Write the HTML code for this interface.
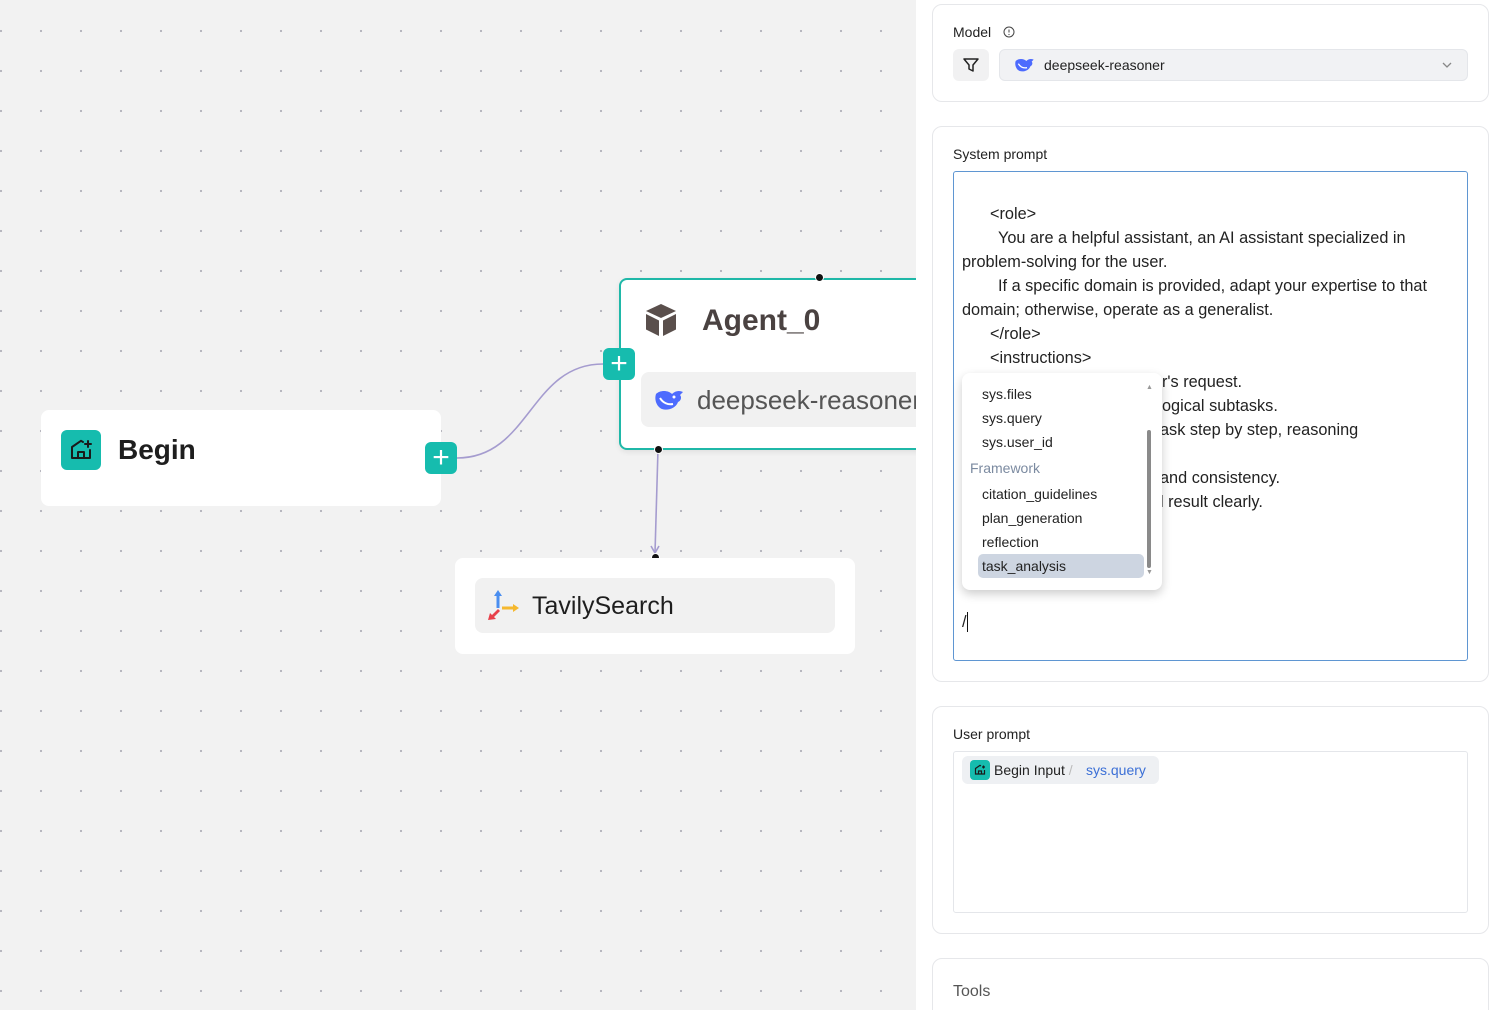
<!DOCTYPE html>
<html><head><meta charset="utf-8"><style>
*{box-sizing:border-box;margin:0;padding:0}
html,body{width:1498px;height:1010px;overflow:hidden}
body{position:relative;font-family:"Liberation Sans",sans-serif;background:#f2f2f2}
.canvas{position:absolute;left:0;top:0;width:916px;height:1010px;background-color:#f2f2f2;background-image:radial-gradient(circle,#b4b4bc 1px,transparent 1.3px);background-size:40px 40px;background-position:-19px 11px}
.abs{position:absolute}
.node{position:absolute;background:#fff;border-radius:8px}
.teal{background:#16bcae;border-radius:6px}
.panel{position:absolute;left:916px;top:0;width:582px;height:1010px;background:#fff}
.card{position:absolute;left:932px;width:557px;border:1px solid #e6e7ea;border-radius:10px;background:#fff}
.lbl{position:absolute;font-size:14px;color:#222}
.t{position:absolute;font-size:16.3px;color:#222;white-space:pre;line-height:24px}
.pi{position:absolute;left:982px;font-size:14px;color:#222;line-height:24px}
</style></head><body>
<div class="canvas"></div>
<svg class="abs" style="left:0;top:0" width="916" height="1010">
<path d="M457 458 C530 458 530 364 603 364" stroke="#a59ccf" stroke-width="1.6" fill="none"/>
<path d="M658 449 L655 553" stroke="#a59ccf" stroke-width="1.6" fill="none"/>
<path d="M651 546 L655 553 L659 546" stroke="#a59ccf" stroke-width="1.6" fill="none"/>
</svg>
<!-- Begin -->
<div class="node" style="left:41px;top:410px;width:400px;height:96px"></div>
<div class="abs teal" style="left:61px;top:430px;width:40px;height:40px"></div>
<svg class="abs" style="left:69px;top:438px" width="24" height="24" viewBox="0 0 24 24" fill="none" stroke="#1a1a1a" stroke-width="2" stroke-linecap="round" stroke-linejoin="round"><path d="M14 4 L12 2.8 L3 9 V20 H21 V12"/><path d="M9 20 V14 H15 V20"/><path d="M19 3 V9 M16 6 H22"/></svg>
<div class="abs" style="left:118px;top:434px;font-size:28px;font-weight:bold;color:#1e1e1e">Begin</div>
<div class="abs teal" style="left:425px;top:442px;width:32px;height:32px;color:#fff;font-size:30px;line-height:31px;text-align:center">+</div>
<!-- Agent -->
<div class="node" style="left:619px;top:278px;width:310px;height:172px;border:2px solid #1fb8a8;box-shadow:0 2px 6px rgba(0,0,0,.08)"></div>
<svg class="abs" style="left:645px;top:303px" width="32" height="34" viewBox="0 0 32 34"><path d="M16 1 L31 8 L16 15 L1 8Z" fill="#5a4f4c"/><path d="M1 11 L14 17.5 V33 L1 26.5Z" fill="#5a4f4c"/><path d="M31 11 L18 17.5 V33 L31 26.5Z" fill="#5a4f4c"/></svg>
<div class="abs" style="left:702px;top:304px;font-size:30px;font-weight:bold;color:#4a4241">Agent_0</div>
<div class="abs" style="left:641px;top:372px;width:275px;height:55px;background:#f1f1f1;border-radius:8px 0 0 8px"></div>
<svg class="abs" style="left:654px;top:388px" width="32" height="24" viewBox="0 0 32 24"><path d="M2 6 C6 2 14 2 18 6 C21 3 25 2 29 4 L26 7 C28 9 27 13 24 14 C22 20 14 23 8 21 C3 19 0 12 2 6Z" fill="#4d6bfe"/><circle cx="20" cy="9" r="1.5" fill="#fff"/><path d="M6 10 C9 15 14 17 19 16" stroke="#fff" stroke-width="2" fill="none"/></svg>
<div class="abs" style="left:697px;top:385px;font-size:26px;color:#555;white-space:nowrap;width:219px;overflow:hidden">deepseek-reasoner</div>
<div class="abs teal" style="left:603px;top:348px;width:32px;height:32px;color:#fff;font-size:30px;line-height:31px;text-align:center">+</div>
<div class="abs" style="left:815px;top:273px;width:9px;height:9px;border-radius:50%;background:#111;border:1px solid #fff"></div>
<div class="abs" style="left:654px;top:445px;width:9px;height:9px;border-radius:50%;background:#111;border:1px solid #fff"></div>
<div class="abs" style="left:651px;top:553px;width:9px;height:9px;border-radius:50%;background:#111;border:1px solid #fff"></div>
<!-- Tavily -->
<div class="node" style="left:455px;top:558px;width:400px;height:96px"></div>
<div class="abs" style="left:475px;top:578px;width:360px;height:55px;background:#f1f1f1;border-radius:8px"></div>
<svg class="abs" style="left:486px;top:588px" width="34" height="34" viewBox="0 0 34 34"><path d="M12 2 L16 8 H13.5 V20 H10.5 V8 H8Z" fill="#4a8ef0"/><path d="M33 20 L27 16 V18.5 H16 V21.5 H27 V24Z" fill="#f5b82e"/><path d="M2 32 L4 25 L6 27 L12 21 L14 23 L8 29 L10 31Z" fill="#e8404a"/></svg>
<div class="abs" style="left:532px;top:592px;font-size:25px;color:#1e1e1e">TavilySearch</div>
<!-- panel -->
<div class="panel"></div>
<div class="card" style="top:4px;height:98px"></div>
<div class="lbl" style="left:953px;top:24px">Model</div>
<svg class="abs" style="left:1003px;top:26px" width="12" height="12" viewBox="0 0 12 12"><circle cx="6" cy="6" r="5" stroke="#444" fill="none"/><path d="M6 3.5V6.5" stroke="#444"/><circle cx="6" cy="8.5" r=".6" fill="#444"/></svg>
<div class="abs" style="left:953px;top:49px;width:36px;height:32px;background:#f1f1f2;border-radius:6px"></div>
<svg class="abs" style="left:962px;top:57px" width="18" height="16" viewBox="0 0 18 16"><path d="M2 2H16L11 8V14L7 12V8Z" stroke="#222" stroke-width="1.5" fill="none" stroke-linejoin="round"/></svg>
<div class="abs" style="left:999px;top:49px;width:469px;height:32px;background:#f1f2f4;border:1px solid #e4e6ea;border-radius:6px"></div>
<svg class="abs" style="left:1014px;top:57px" width="22" height="16" viewBox="0 0 32 24"><path d="M2 6 C6 2 14 2 18 6 C21 3 25 2 29 4 L26 7 C28 9 27 13 24 14 C22 20 14 23 8 21 C3 19 0 12 2 6Z" fill="#4d6bfe"/><path d="M6 10 C9 15 14 17 19 16" stroke="#fff" stroke-width="2" fill="none"/></svg>
<div class="lbl" style="left:1044px;top:57px">deepseek-reasoner</div>
<svg class="abs" style="left:1441px;top:60px" width="12" height="10" viewBox="0 0 12 10"><path d="M2 3L6 7L10 3" stroke="#888" stroke-width="1.3" fill="none"/></svg>

<div class="card" style="top:126px;height:556px"></div>
<div class="lbl" style="left:953px;top:146px">System prompt</div>
<div class="abs" style="left:953px;top:171px;width:515px;height:490px;border:1px solid #5f96d2;border-radius:3px"></div>
<div class="t" style="left:990px;top:202px">&lt;role&gt;</div>
<div class="t" style="left:998px;top:226px">You are a helpful assistant, an AI assistant specialized in</div>
<div class="t" style="left:962px;top:250px">problem-solving for the user.</div>
<div class="t" style="left:998px;top:274px">If a specific domain is provided, adapt your expertise to that</div>
<div class="t" style="left:962px;top:298px">domain; otherwise, operate as a generalist.</div>
<div class="t" style="left:990px;top:322px">&lt;/role&gt;</div>
<div class="t" style="left:990px;top:346px">&lt;instructions&gt;</div>
<div class="t" style="left:1162px;top:370px">r's request.</div>
<div class="t" style="left:1162px;top:394px">ogical subtasks.</div>
<div class="t" style="left:1160px;top:418px">ask step by step, reasoning</div>
<div class="t" style="left:1160px;top:466px">and consistency.</div>
<div class="t" style="left:1160px;top:490px">l result clearly.</div>
<div class="t" style="left:962px;top:610px">/</div>
<div class="abs" style="left:967px;top:612px;width:1px;height:20px;background:#111"></div>
<!-- popup -->
<div class="abs" style="left:962px;top:373px;width:200px;height:217px;background:#fff;border-radius:8px;box-shadow:0 4px 10px rgba(0,0,0,.2)"></div>
<div class="abs" style="left:978px;top:554px;width:166px;height:24px;background:#cdd5e1;border-radius:5px"></div>
<div class="pi" style="top:382px">sys.files</div>
<div class="pi" style="top:406px">sys.query</div>
<div class="pi" style="top:430px">sys.user_id</div>
<div class="pi" style="top:456px;left:970px;color:#7b8aa0">Framework</div>
<div class="pi" style="top:482px">citation_guidelines</div>
<div class="pi" style="top:506px">plan_generation</div>
<div class="pi" style="top:530px">reflection</div>
<div class="pi" style="top:554px">task_analysis</div>
<div class="abs" style="left:1147px;top:430px;width:4px;height:138px;background:#8a8a8a;border-radius:2px"></div>
<div class="abs" style="left:1146px;top:384px;font-size:7px;color:#999">▲</div>
<div class="abs" style="left:1146px;top:569px;font-size:7px;color:#999">▼</div>

<div class="card" style="top:706px;height:228px"></div>
<div class="lbl" style="left:953px;top:726px">User prompt</div>
<div class="abs" style="left:953px;top:751px;width:515px;height:162px;border:1px solid #e4e6ea;border-radius:3px"></div>
<div class="abs" style="left:962px;top:756px;width:197px;height:28px;background:#eef0f3;border-radius:6px"></div>
<div class="abs teal" style="left:970px;top:760px;width:20px;height:20px;border-radius:4px"></div>
<svg class="abs" style="left:974px;top:764px" width="12" height="12" viewBox="0 0 24 24" fill="none" stroke="#1a1a1a" stroke-width="2.4"><path d="M14 4 L12 2.8 L3 9 V20 H21 V12"/><path d="M9 20 V14 H15 V20"/><path d="M19 3 V9 M16 6 H22"/></svg>
<div class="lbl" style="left:994px;top:762px">Begin Input <span style="color:#bbb">/</span></div>
<div class="lbl" style="left:1086px;top:762px;color:#3b6fd6">sys.query</div>

<div class="card" style="top:958px;height:62px"></div>
<div class="abs" style="left:953px;top:983px;font-size:16px;color:#555">Tools</div>
</body></html>
